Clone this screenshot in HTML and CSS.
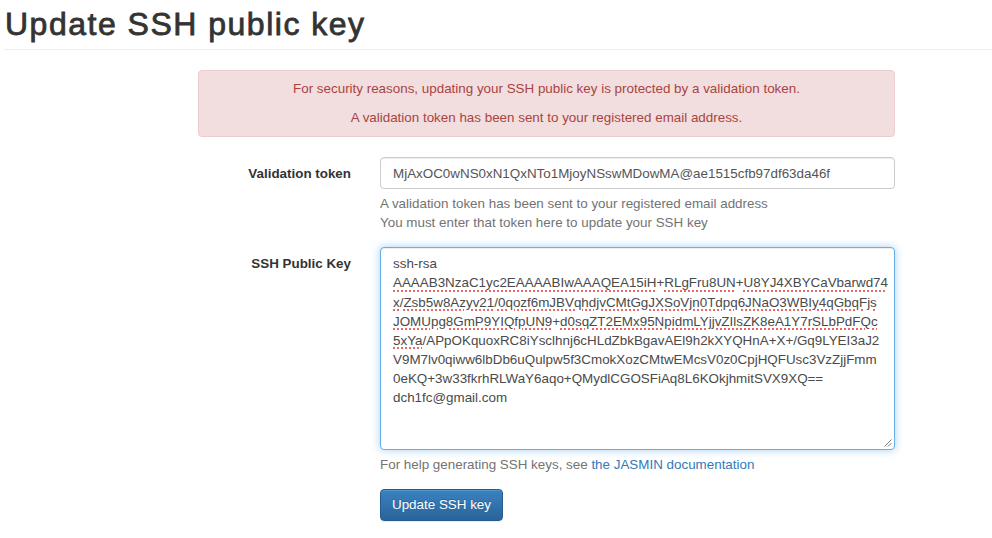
FILE: index.html
```html
<!DOCTYPE html>
<html lang="en">
<head>
<meta charset="utf-8">
<title>Update SSH public key</title>
<link rel="stylesheet" href="styles.css">
</head>
<body>
<div class="page">
  <h1 class="page-header">Update SSH public key</h1>
  <div class="panel">
    <div class="alert">
      <p>For security reasons, updating your SSH public key is protected by a validation token.</p>
      <p>A validation token has been sent to your registered email address.</p>
    </div>
    <form class="form" onsubmit="return false">
      <label class="label" for="token">Validation token</label>
      <div class="field">
        <input id="token" class="input" type="text" value="MjAxOC0wNS0xN1QxNTo1MjoyNSswMDowMA@ae1515cfb97df63da46f">
        <p class="help">A validation token has been sent to your registered email address<br>You must enter that token here to update your SSH key</p>
      </div>
      <label class="label" for="key">SSH Public Key</label>
      <div class="field">
        <div id="key" class="textarea" role="textbox" aria-multiline="true">
          <div class="line">ssh-rsa</div>
          <div class="line"><span class="sp">AAAAB3NzaC1yc2EAAAABIwAAAQEA15iH</span>+<span class="sp">RLgFru8UN</span>+<span class="sp">U8YJ4XBYCaVbarwd74</span></div>
          <div class="line"><span class="sp">x</span>/<span class="sp">Zsb5w8Azyv21</span>/<span class="sp">0qozf6mJBVqhdjvCMtGgJXSoVjn0Tdpq6JNaO3WBIy4qGbqFjs</span></div>
          <div class="line"><span class="sp">JOMUpg8GmP9YIQfpUN9</span>+<span class="sp">d0sqZT2EMx95NpidmLYjjvZIlsZK8eA1Y7rSLbPdFQc</span></div>
          <div class="line"><span class="sp">5xYa</span>/APpOKquoxRC8iYsclhnj6cHLdZbkBgavAEl9h2kXYQHnA+X+/Gq9LYEI3aJ2</div>
          <div class="line">V9M7lv0qiww6lbDb6uQulpw5f3CmokXozCMtwEMcsV0z0CpjHQFUsc3VzZjjFmm</div>
          <div class="line">0eKQ+3w33fkrhRLWaY6aqo+QMydlCGOSFiAq8L6KOkjhmitSVX9XQ==</div>
          <div class="line">dch1fc@gmail.com</div>
          <svg class="grip" width="9" height="9" viewBox="0 0 9 9" aria-hidden="true">
            <path d="M8.5 1.5 L1.5 8.5 M8.5 5 L5 8.5" stroke="#7a7a7a" stroke-width="1" fill="none"/>
          </svg>
        </div>
        <p class="help">For help generating SSH keys, see <a href="#">the JASMIN documentation</a></p>
      </div>
      <div></div>
      <div class="field">
        <button class="btn" type="submit">Update SSH key</button>
      </div>
    </form>
  </div>
</div>
</body>
</html>
```

FILE: styles.css
```css
html, body {
  margin: 0;
  padding: 0;
  background: #fff;
}

body {
  font-family: "Liberation Sans", Arial, Helvetica, sans-serif;
  font-size: 13.4px;
  line-height: 19.14px;
  color: #333;
}

.page {
  padding-left: 4px;
}

.page-header {
  margin: 6px 0 0 0;
  padding: 0 0 7px 1px;
  font-size: 32px;
  line-height: 36px;
  font-weight: 400;
  letter-spacing: 1.5px;
  -webkit-text-stroke: 0.8px #333;
  color: #333;
  border-bottom: 1px solid #eee;
}

.panel {
  margin-left: 194px;
  width: 697px;
  padding-top: 20px;
}

.alert {
  background: #f2dede;
  border: 1px solid #ebccd1;
  border-radius: 4px;
  color: #a94442;
  text-align: center;
  padding: 9px 15px;
  margin-bottom: 20px;
}

.alert p {
  margin: 0;
  line-height: 18px;
}

.alert p + p {
  margin-top: 11px;
}

.form {
  display: grid;
  grid-template-columns: 168px 1fr;
}

.label {
  font-weight: 700;
  text-align: right;
  padding: 7px 15px 0 0;
  color: #333;
}

.field {
  padding-left: 14px;
  margin-bottom: 15px;
  min-width: 0;
}

.input {
  display: block;
  box-sizing: border-box;
  width: 100%;
  height: 32px;
  margin: 0;
  padding: 6px 12px;
  font-family: inherit;
  font-size: 13.4px;
  color: #555;
  background: #fff;
  border: 1px solid #ccc;
  border-radius: 4px;
  box-shadow: inset 0 1px 1px rgba(0, 0, 0, 0.075);
  outline: none;
}

.help {
  margin: 5px 0 0 0;
  color: #737373;
}

.help a {
  color: #337ab7;
  text-decoration: none;
}

.textarea {
  position: relative;
  box-sizing: border-box;
  height: 203px;
  padding: 6px 12px;
  color: #4a4a4a;
  background: #fff;
  border: 1px solid #66afe9;
  border-radius: 4px;
  box-shadow: inset 0 1px 1px rgba(0, 0, 0, 0.075), 0 0 8px rgba(102, 175, 233, 0.6);
  overflow: hidden;
}

.line {
  white-space: pre;
  height: 19.14px;
}

.sp {
  text-decoration-line: underline;
  text-decoration-style: dotted;
  text-decoration-color: #ec6a64;
  text-decoration-thickness: 2px;
  text-underline-offset: 3px;
}

.grip {
  position: absolute;
  right: 2px;
  bottom: 2px;
}

.btn {
  display: inline-block;
  margin: 0;
  padding: 6px 11px;
  height: 32px;
  font-family: inherit;
  font-size: 13.4px;
  line-height: 18px;
  color: #fff;
  text-shadow: 0 -1px 0 rgba(0, 0, 0, 0.2);
  background: linear-gradient(to bottom, #3a82c1 0%, #2a639a 100%);
  border: 1px solid #255c8d;
  border-radius: 4px;
  box-shadow: inset 0 1px 0 rgba(255, 255, 255, 0.15), 0 1px 1px rgba(0, 0, 0, 0.075);
  cursor: pointer;
}
```
